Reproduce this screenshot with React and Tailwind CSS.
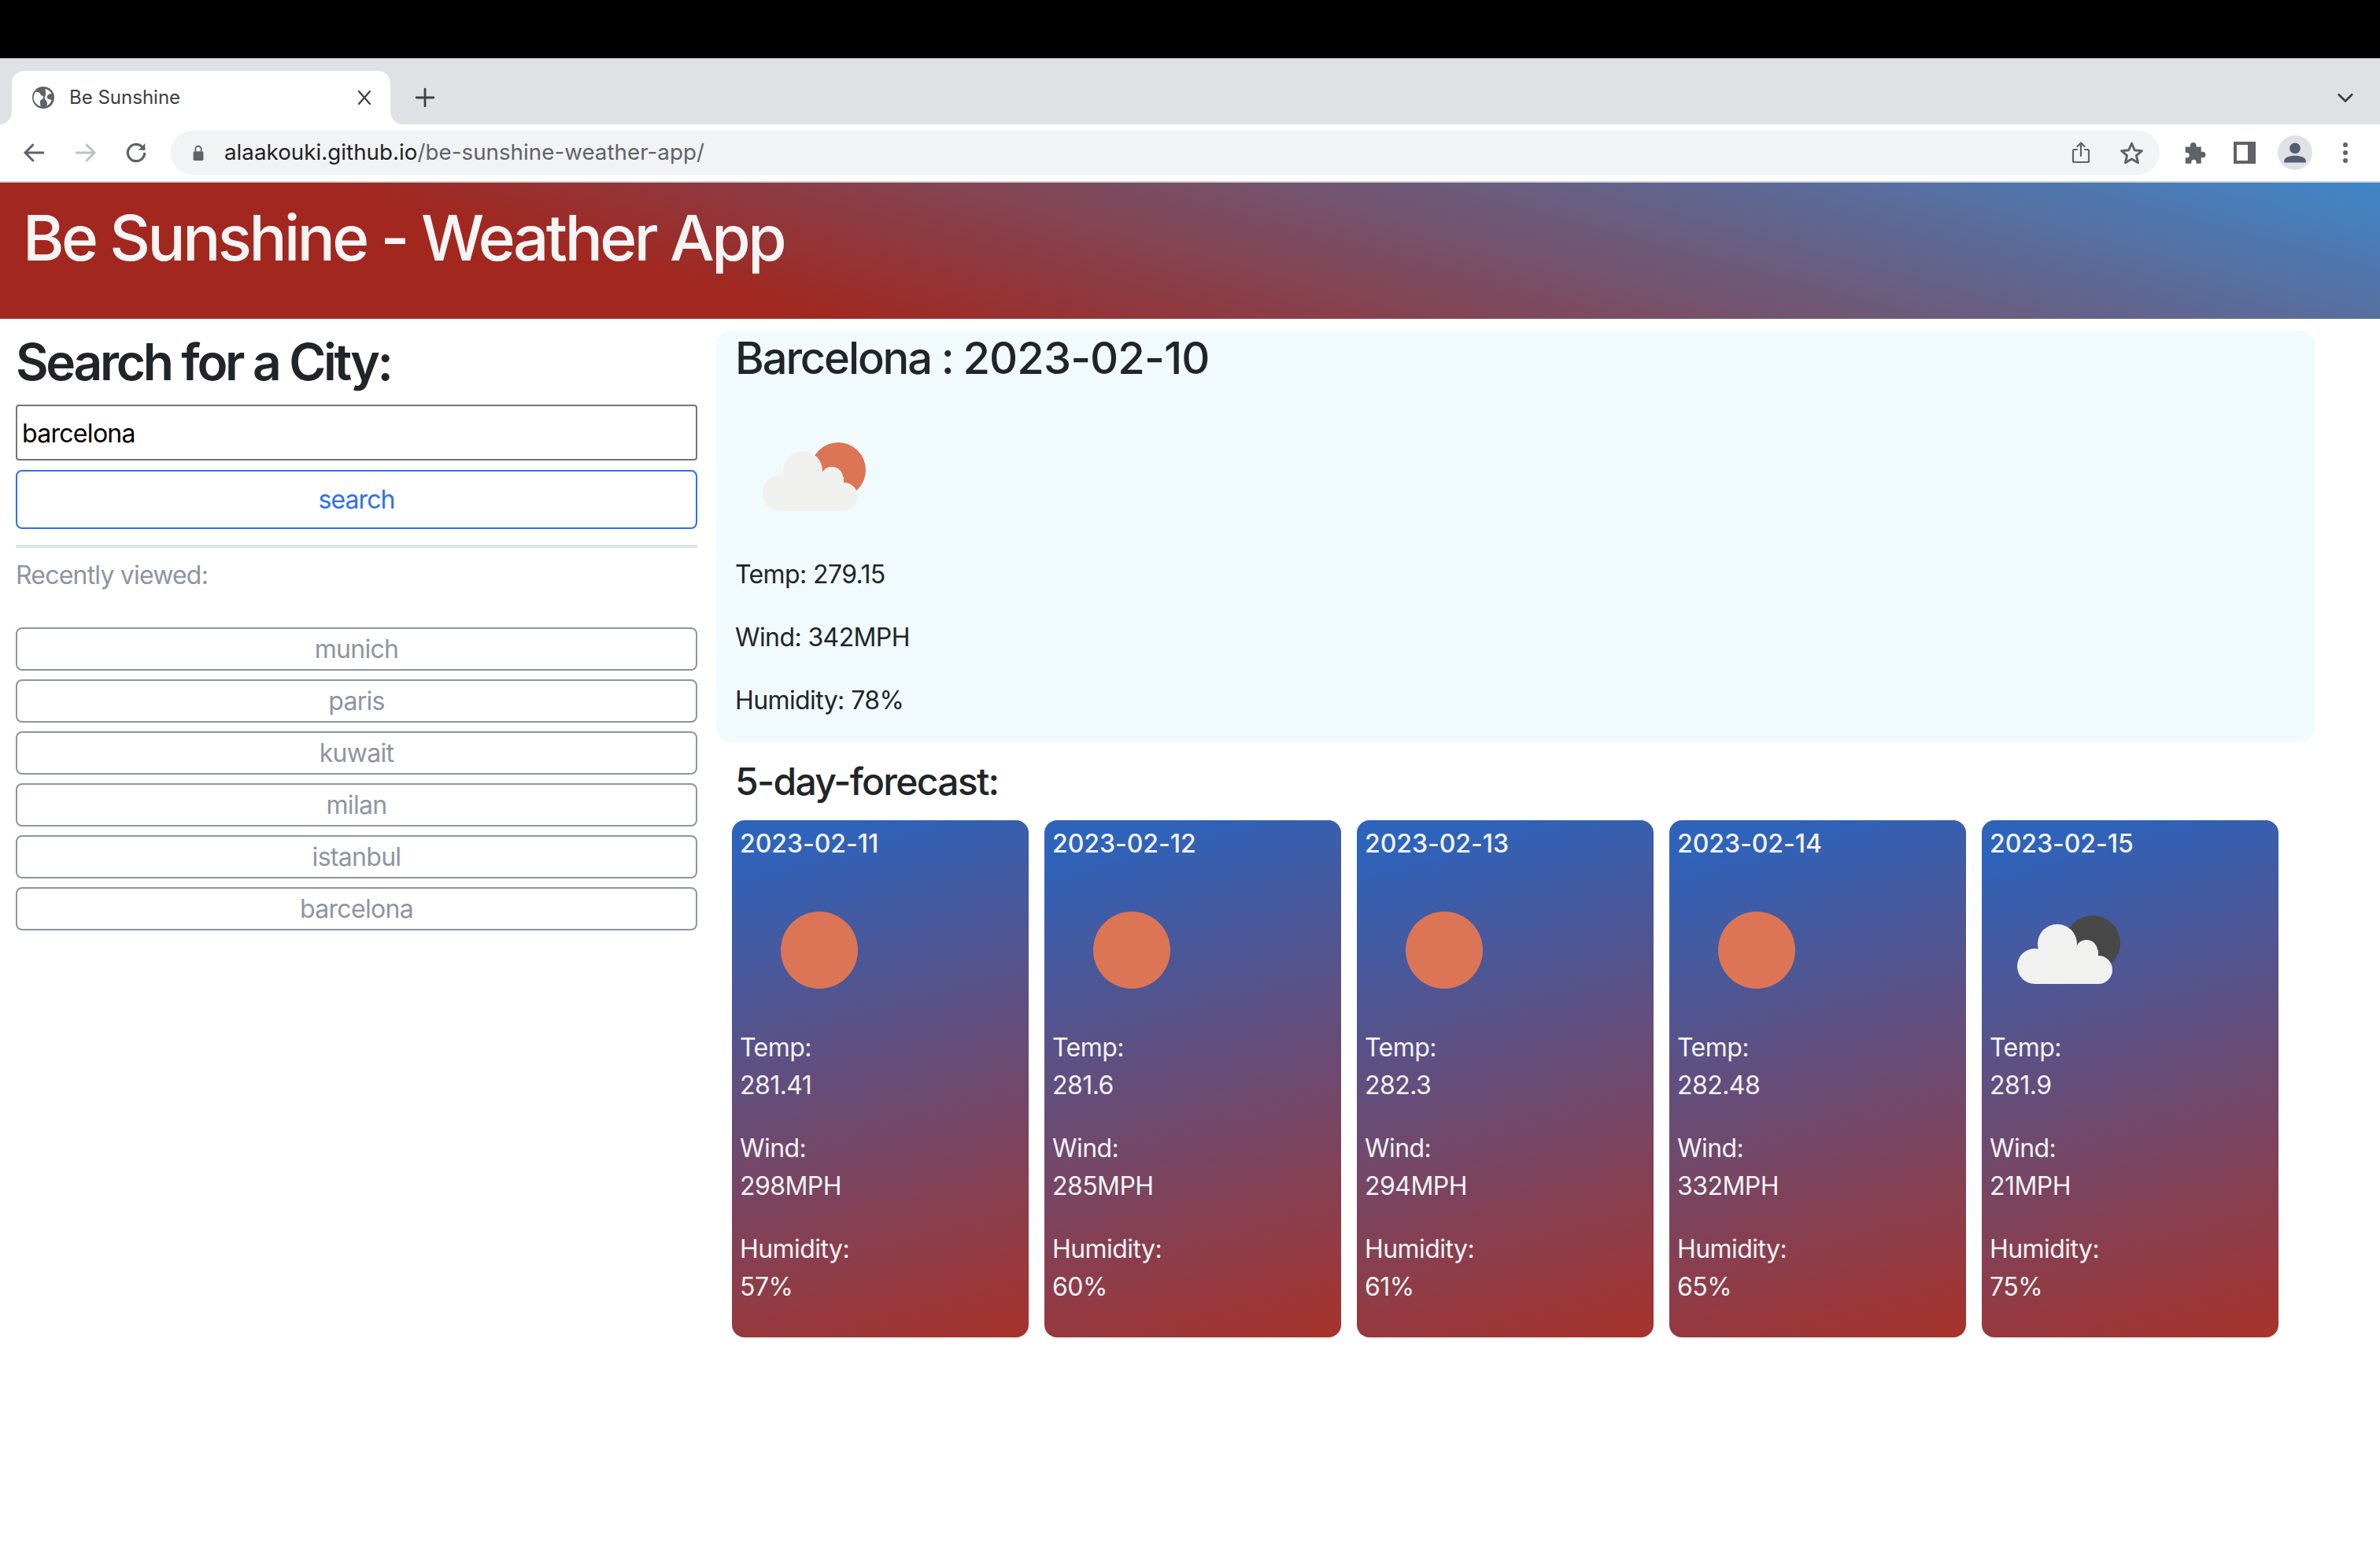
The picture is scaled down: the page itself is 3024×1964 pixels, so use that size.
import React from "react";

function Sun() {
  return (
    <svg viewBox="0 0 200 200" className="w-[200px] h-[200px] block">
      <circle cx="100" cy="100" r="49" fill="#dc7555" />
    </svg>
  );
}

function Cloud({ sun, cloud = "#f1f1f0" }) {
  return (
    <svg viewBox="0 0 200 200" className="w-[200px] h-[200px] block">
      <circle cx="130" cy="91" r="35" fill={sun} />
      <g fill={cloud}>
        <circle cx="85" cy="92" r="25" />
        <circle cx="122" cy="101" r="14" />
        <circle cx="137" cy="125" r="18" />
        <circle cx="56.5" cy="120.5" r="22.5" />
        <rect x="56" y="100" width="81" height="43" />
      </g>
    </svg>
  );
}

const forecast = [
  { date: "2023-02-11", temp: "281.41", wind: "298MPH", hum: "57%", sun: true },
  { date: "2023-02-12", temp: "281.6", wind: "285MPH", hum: "60%", sun: true },
  { date: "2023-02-13", temp: "282.3", wind: "294MPH", hum: "61%", sun: true },
  { date: "2023-02-14", temp: "282.48", wind: "332MPH", hum: "65%", sun: true },
  { date: "2023-02-15", temp: "281.9", wind: "21MPH", hum: "75%", sun: false },
];

const recent = ["munich", "paris", "kuwait", "milan", "istanbul", "barcelona"];

function Chrome() {
  return (
    <div className="font-['Inter',sans-serif]">
      <div className="h-[74px] bg-black" />
      <div className="h-[84px] bg-[#dfe1e5] flex items-end pl-[15px] pr-[33px]">
        <div className="relative w-[481px] h-[68px] bg-white rounded-t-[16px] flex items-center pl-[26px] pr-[23px]">
          <div className="absolute left-[-16px] bottom-0 w-[16px] h-[16px] bg-white">
            <div className="w-full h-full bg-[#dfe1e5] rounded-br-[16px]" />
          </div>
          <div className="absolute right-[-16px] bottom-0 w-[16px] h-[16px] bg-white">
            <div className="w-full h-full bg-[#dfe1e5] rounded-bl-[16px]" />
          </div>
          <svg viewBox="0 0 24 24" className="w-[28px] h-[28px] shrink-0">
            <circle cx="12" cy="12" r="12" fill="#5f6368" />
            <path d="M3.500 6c2.500-.5 4.500.5 5.500 2.500s3.500 1 3 3.500-3.500 2-3.500 4.500l.5 5c-3.500-1-6.500-4-7.500-8-.5-2.500.5-5.500 2-7.500z" fill="#fff" />
            <path d="M14 2.500c3 .5 5.500 2.500 7 5-2 .5-3.500 1-4.500 2.500s-.5 3 1 3.500l3.500 1c-.5 2.500-2.500 5-5 6.500.5-2.500.5-4.500-1-6s-2-3-1-4.500 1-3.500 0-8z" fill="#fff" />
          </svg>
          <span className="ml-[19px] text-[24px] text-[#3c4043] leading-none">Be Sunshine</span>
          <svg viewBox="0 0 20 20" className="ml-auto w-[20px] h-[20px]" stroke="#3c4043" strokeWidth="2.2" strokeLinecap="round">
            <path d="M3 2l14 16M17 2L3 18" />
          </svg>
        </div>
        <div className="h-[68px] flex items-center ml-[31px]">
          <svg viewBox="0 0 24 24" className="w-[26px] h-[26px]" stroke="#3c4043" strokeWidth="2.6" strokeLinecap="round">
            <path d="M12 2v20M2 12h20" />
          </svg>
        </div>
        <div className="h-[68px] flex items-center ml-auto">
          <svg viewBox="0 0 24 24" className="w-[22px] h-[22px]" fill="none" stroke="#3c4043" strokeWidth="3" strokeLinecap="round" strokeLinejoin="round">
            <path d="M3 8l9 9 9-9" />
          </svg>
        </div>
      </div>
      <div className="h-[72px] bg-white flex items-center pl-[28px]">
        <svg viewBox="0 0 24 24" className="w-[32px] h-[32px]" fill="none" stroke="#5f6368" strokeWidth="2.2">
          <path d="M21 12H4M11 4l-8 8 8 8" />
        </svg>
        <svg viewBox="0 0 24 24" className="w-[32px] h-[32px] ml-[32px]" fill="none" stroke="#bdc1c6" strokeWidth="2.2">
          <path d="M3 12h17M13 4l8 8-8 8" />
        </svg>
        <svg viewBox="0 0 24 24" className="w-[32px] h-[32px] ml-[33px]" fill="none" stroke="#5f6368" strokeWidth="2.4">
          <path d="M20 12a8 8 0 1 1-2.600-5.900L20 9" />
          <path d="M20.500 3v6.500H14" fill="#5f6368" stroke="none" />
        </svg>
        <div className="ml-[28px] w-[2527px] h-[56px] rounded-full bg-[#f1f3f4] flex items-center pl-[27px] pr-[20px]">
          <svg viewBox="0 0 16 24" className="w-[16px] h-[22px] shrink-0">
            <path d="M4 10V7a4 4 0 0 1 8 0v3" fill="none" stroke="#5f6368" strokeWidth="2" />
            <rect x="1" y="10" width="14" height="13" rx="2" fill="#5f6368" />
          </svg>
          <span className="ml-[25px] text-[27.7px] leading-none text-[#202124] tracking-[0.05px]">
            alaakouki.github.io<span className="text-[#5f6368]">/be-sunshine-weather-app/</span>
          </span>
          <svg viewBox="0 0 24 28" className="ml-auto w-[24px] h-[30px]" fill="none" stroke="#5f6368" strokeWidth="2.2" strokeLinecap="round" strokeLinejoin="round">
            <path d="M7 10H3.500a1.500 1.500 0 0 0-1.500 1.500v13A1.500 1.500 0 0 0 3.500 26h17a1.500 1.500 0 0 0 1.500-1.500v-13a1.500 1.500 0 0 0-1.500-1.500H17" />
            <path d="M12 18V2M7.500 6L12 1.500 16.500 6" />
          </svg>
          <svg viewBox="0 0 24 24" className="ml-[37px] w-[31px] h-[31px]" fill="none" stroke="#5f6368" strokeWidth="2.300" strokeLinejoin="round">
            <path d="M12 2.500l2.900 6.600 7.100.7-5.400 4.700 1.600 7L12 17.800 5.800 21.500l1.600-7L2 9.800l7.100-.7z" />
          </svg>
        </div>
        <svg viewBox="0 0 24 24" className="ml-[29px] w-[30px] h-[30px]" fill="#5f6368">
          <path d="M3 6h5V4.500a3 3 0 0 1 6 0V6h5v5h1.500a3 3 0 0 1 0 6H19v6h-5v-1.500a2.500 2.500 0 0 0-5 0V23H3v-6h1.500a2.500 2.500 0 0 0 0-5H3z" />
        </svg>
        <div className="ml-[35px] w-[28px] h-[28px] border-[4px] border-[#5f6368] bg-[#5f6368] flex justify-start">
          <div className="w-[14px] h-full bg-white" />
        </div>
        <div className="ml-[28px] w-[44px] h-[44px] rounded-full bg-[#dfe1e5] flex items-center justify-center">
          <svg viewBox="0 0 24 24" className="w-[30px] h-[30px]" fill="#535e73">
            <circle cx="12" cy="7.500" r="5.500" />
            <path d="M1 22v-2c0-3 5.500-5 11-5s11 2 11 5v2z" />
          </svg>
        </div>
        <div className="ml-[39px] flex flex-col gap-[4px]">
          <div className="w-[6px] h-[6px] rounded-full bg-[#5f6368]" />
          <div className="w-[6px] h-[6px] rounded-full bg-[#5f6368]" />
          <div className="w-[6px] h-[6px] rounded-full bg-[#5f6368]" />
        </div>
      </div>
      <div className="h-[2px] bg-[#d3d5d8]" />
    </div>
  );
}

export default function App() {
  return (
    <div className="min-h-[1964px] bg-white font-['Inter',sans-serif] text-[#212529]">
      <Chrome />
      <header className="h-[173px] flex items-center pl-[29px] pb-[34px] bg-[linear-gradient(15deg,#a2271f_28%,#3f86c9_100%)]">
        <h1 className="text-[80px] leading-[1.2] font-medium text-[#f5f5f5] tracking-[-3.5px]">Be Sunshine - Weather App</h1>
      </header>
      <main className="flex items-start pl-[20px]">
        <aside className="w-[866px] pt-[16px] shrink-0 tracking-[-0.7px]">
          <h2 className="text-[64px] leading-[78px] font-semibold tracking-[-3.3px] mb-[15px]">Search for a City:</h2>
          <input
            readOnly
            value="barcelona"
            className="w-full h-[71px] border-[2px] border-[#767676] rounded-[4px] px-[6px] pt-[2px] text-[32px] text-black bg-white outline-none block tracking-[-0.7px]"
          />
          <button className="mt-[12px] w-full h-[75px] border-[2px] border-[#2f6fed] rounded-[8px] text-[#2f6fed] text-[32px] bg-white block tracking-[-0.9px]">search</button>
          <div className="mt-[20px] h-[4px] bg-[#dee2e6]" />
          <p className="mt-[11px] text-[32px] leading-[48px] text-[#8e95a3] mb-[42px] tracking-[-0.8px]">Recently viewed:</p>
          <div className="flex flex-col gap-[11px]">
            {recent.map((c) => (
              <button key={c} className="w-full h-[55px] border-[2px] border-[#8f95a3] rounded-[8px] text-[#8e95a3] text-[32px] leading-none bg-white">{c}</button>
            ))}
          </div>
        </aside>
        <section className="ml-[24px] w-[2031px] pt-[15px] shrink-0">
          <div className="bg-[#f1fafd] rounded-[20px] pl-[24px] pb-[29px] tracking-[-0.6px]">
            <h2 className="text-[56px] leading-[71px] font-medium mb-[15px]">
              <span className="tracking-[-2.1px]">Barcelona : </span>
              <span className="tracking-[-0.9px]">2023-02-10</span>
            </h2>
            <div className="ml-[1px]">
              <Cloud sun="#dc7555" cloud="#f0f1ef" />
            </div>
            <p className="text-[32px] leading-[48px] mb-[32px]">Temp: 279.15</p>
            <p className="text-[32px] leading-[48px] mb-[32px]">Wind: 342MPH</p>
            <p className="text-[32px] leading-[48px]">Humidity: 78%</p>
          </div>
          <h3 className="mt-[21px] ml-[24px] text-[48px] leading-[58px] font-medium tracking-[-1.7px]">5-day-forecast:</h3>
          <div className="mt-[20px] ml-[20px] flex gap-[20px]">
            {forecast.map((f) => (
              <div key={f.date} className="w-[377px] h-[657px] rounded-[16px] pt-[6px] px-[10px] text-[32px] leading-[48px] tracking-[-0.55px] text-[#f3f3f5] bg-[linear-gradient(165deg,#2e63bb_6%,#a8322a_100%)]">
                <p className="font-medium tracking-[-0.05px]">{f.date}</p>
                <div className="mt-[11px] ml-[1px]">
                  {f.sun ? <Sun /> : <Cloud sun="#484848" />}
                </div>
                <p>Temp:</p>
                <p className="mb-[32px]">{f.temp}</p>
                <p>Wind:</p>
                <p className="mb-[32px]">{f.wind}</p>
                <p>Humidity:</p>
                <p>{f.hum}</p>
              </div>
            ))}
          </div>
        </section>
      </main>
    </div>
  );
}
